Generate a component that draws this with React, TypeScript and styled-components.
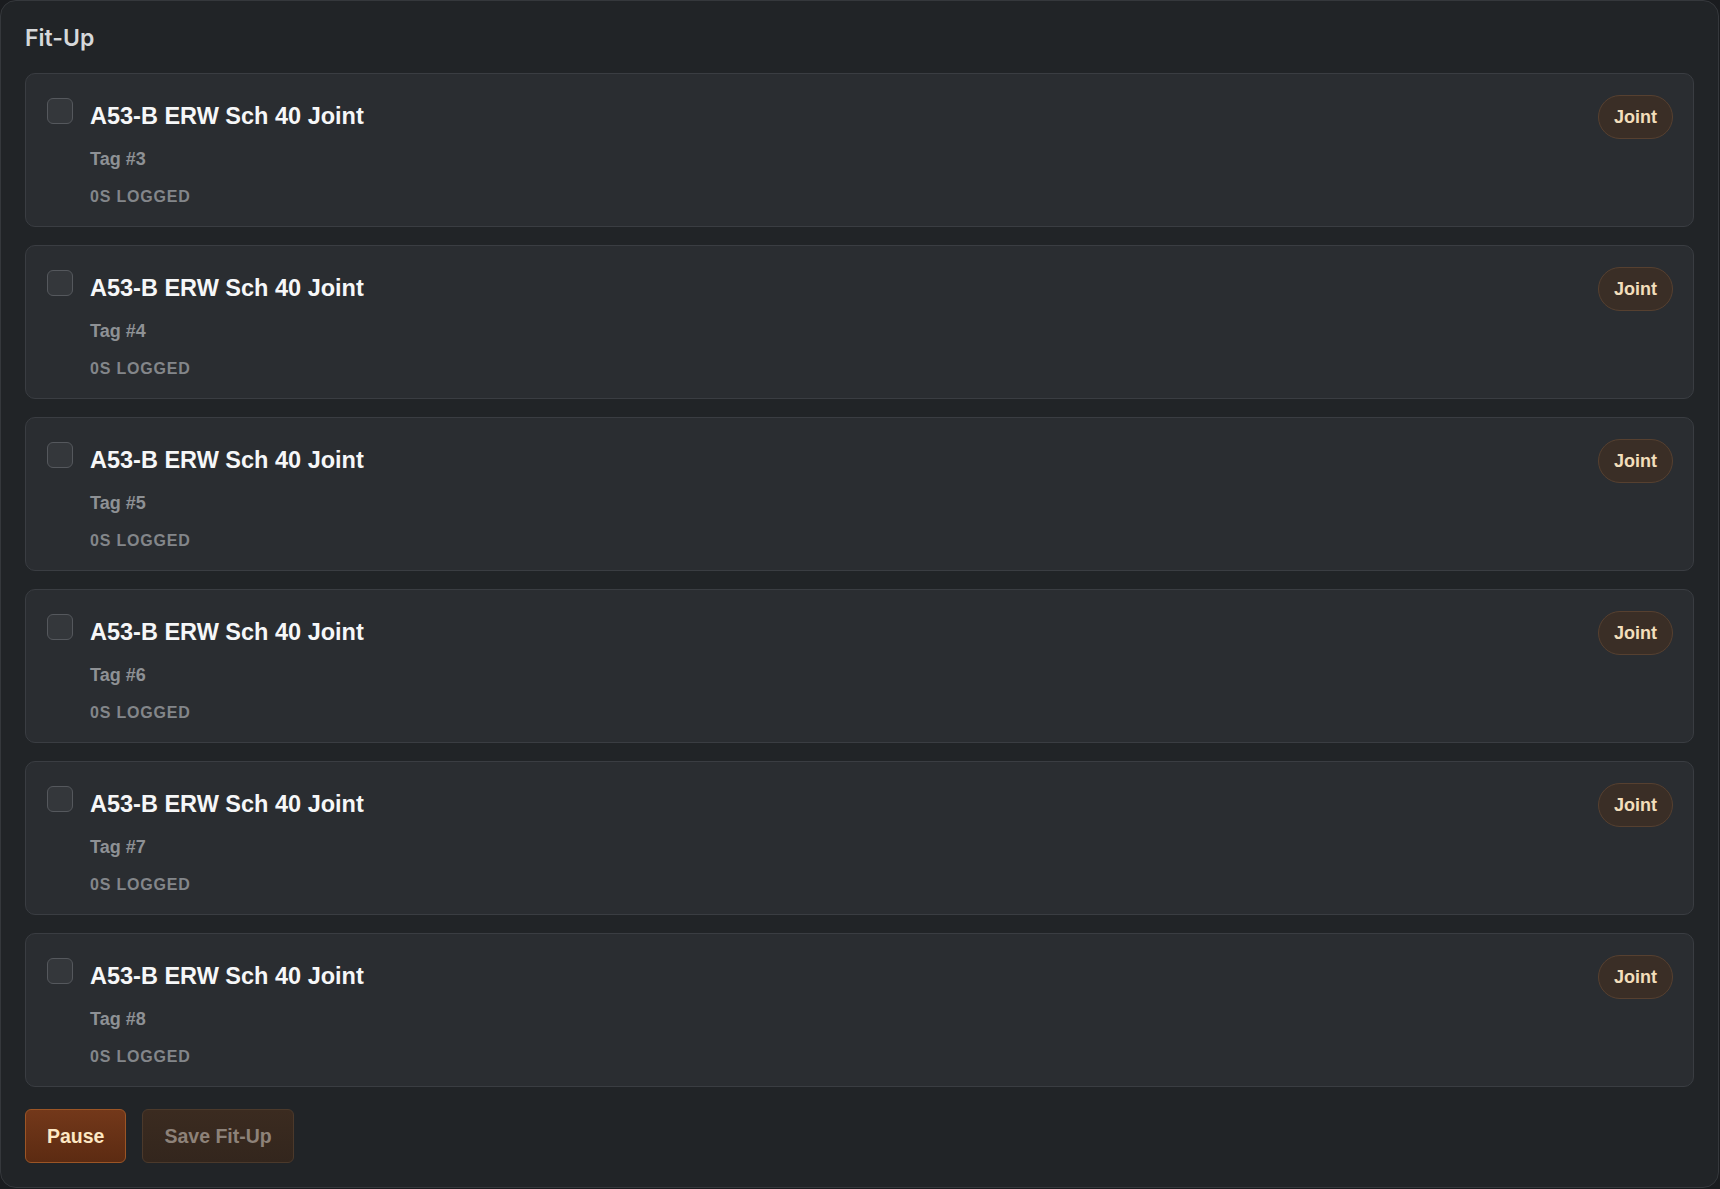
import React, { useState } from "react";
import styled, { createGlobalStyle } from "styled-components";

const GlobalStyle = createGlobalStyle`
  html, body {
    margin: 0;
    padding: 0;
    background-color: #1a1c1f;
  }
  * {
    box-sizing: border-box;
  }
`;

const Panel = styled.section`
  width: 1719px;
  min-height: 1187px;
  padding: 24px;
  background-color: #212427;
  border: 1px solid #35383c;
  border-radius: 16px;
  display: flex;
  flex-direction: column;
`;

const Heading = styled.h2`
  margin: 0 0 21px;
  font-family: Inter, "Liberation Sans", sans-serif;
  font-weight: 600;
  font-size: 23px;
  line-height: 27px;
  color: #d6d8da;
`;

const List = styled.div`
  display: flex;
  flex-direction: column;
  gap: 18px;
`;

const Card = styled.div`
  display: flex;
  align-items: flex-start;
  padding: 21px 20px 20px 21px;
  background-color: #2a2d31;
  border: 1px solid #3a3d42;
  border-radius: 10px;
`;

const Check = styled.input`
  appearance: none;
  flex: none;
  width: 26px;
  height: 26px;
  margin: 3px 17px 0 0;
  background-color: #34373b;
  border: 1px solid #55585d;
  border-radius: 6px;
  cursor: pointer;

  &:checked {
    background-color: #6b3418;
    border-color: #a0582a;
  }
`;

const Body = styled.div`
  flex: 1;
  display: flex;
  flex-direction: column;
  padding-top: 7px;
  font-family: "Liberation Sans", Arial, sans-serif;
  font-weight: 700;
`;

const Name = styled.div`
  font-size: 23.5px;
  line-height: 28px;
  color: #f6f7f8;
`;

const TagLine = styled.div`
  margin-top: 19px;
  font-size: 18px;
  line-height: 20px;
  color: #8e9195;
`;

const Logged = styled.div`
  margin-top: 19px;
  font-size: 16px;
  line-height: 18px;
  letter-spacing: 0.05em;
  text-transform: uppercase;
  color: #83868a;
`;

const Pill = styled.span`
  flex: none;
  display: inline-flex;
  align-items: center;
  height: 44px;
  padding: 0 15px;
  background-color: #3a2e26;
  border: 1px solid #564030;
  border-radius: 22px;
  font-family: "Liberation Sans", Arial, sans-serif;
  font-weight: 700;
  font-size: 18px;
  color: #f2debb;
`;

const Actions = styled.div`
  display: flex;
  gap: 16px;
  margin-top: 22px;
`;

const ActionButton = styled.button<{ $primary?: boolean }>`
  height: 54px;
  padding: 0 21px;
  border-radius: 6px;
  font-family: "Liberation Sans", Arial, sans-serif;
  font-weight: 700;
  font-size: 19.5px;
  cursor: ${(p) => (p.$primary ? "pointer" : "default")};
  color: ${(p) => (p.$primary ? "#fde8c4" : "#8d8279")};
  background: ${(p) =>
    p.$primary
      ? "linear-gradient(180deg, #73381a 0%, #5c2b12 100%)"
      : "linear-gradient(180deg, #3b2b20 0%, #33261d 100%)"};
  border: 1px solid ${(p) => (p.$primary ? "#9b5526" : "#4b392b")};
`;

const joints = [3, 4, 5, 6, 7, 8].map((tag) => ({
  tag,
  name: "A53-B ERW Sch 40 Joint",
  seconds: 0,
  kind: "Joint",
}));

const App = () => {
  const [checked, setChecked] = useState<number[]>([]);

  const toggle = (tag: number) =>
    setChecked((prev) =>
      prev.includes(tag) ? prev.filter((t) => t !== tag) : [...prev, tag]
    );

  return (
    <>
      <GlobalStyle />
      <Panel>
        <Heading>Fit-Up</Heading>
        <List>
          {joints.map((j) => (
            <Card key={j.tag}>
              <Check
                type="checkbox"
                checked={checked.includes(j.tag)}
                onChange={() => toggle(j.tag)}
              />
              <Body>
                <Name>{j.name}</Name>
                <TagLine>Tag #{j.tag}</TagLine>
                <Logged>{j.seconds}s logged</Logged>
              </Body>
              <Pill>{j.kind}</Pill>
            </Card>
          ))}
        </List>
        <Actions>
          <ActionButton $primary>Pause</ActionButton>
          <ActionButton disabled={checked.length === 0}>Save Fit-Up</ActionButton>
        </Actions>
      </Panel>
    </>
  );
};

export default App;
